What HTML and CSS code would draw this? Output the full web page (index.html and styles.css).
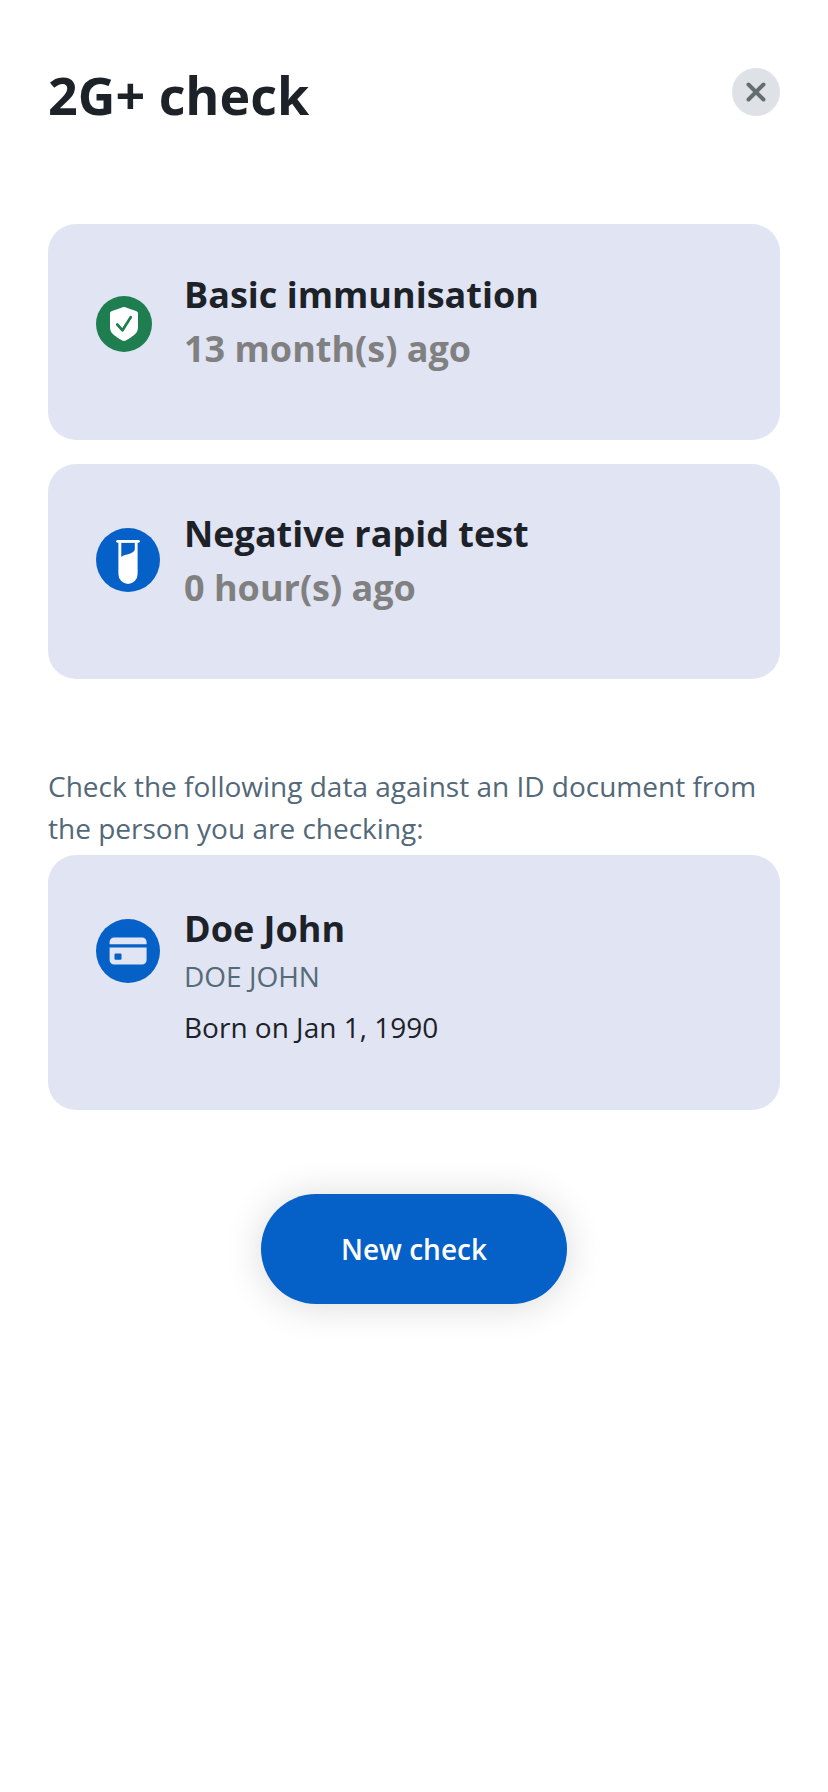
FILE: index.html
```html
<!DOCTYPE html>
<html lang="en">
<head>
<meta charset="utf-8">
<title>2G+ check</title>
<link rel="stylesheet" href="styles.css">
</head>
<body>
<main class="page">
  <header class="header">
    <h1 class="title">2G+ check</h1>
    <button class="close" aria-label="Close">
      <svg width="48" height="48" viewBox="0 0 48 48"><path d="M16.500 16.500l15 15M31.500 16.500l-15 15" stroke="#636e6e" stroke-width="4" stroke-linecap="round"/></svg>
    </button>
  </header>

  <section class="card card-immunisation">
    <div class="icon-cell">
      <svg width="56" height="56" viewBox="0 0 56 56"><circle cx="28" cy="28" r="28" fill="#1e7e50"/><path d="M28 11c1 0 2 .4 3.200.9l8.800 3.200c1.300.5 2 1.100 2 2.400V31c0 4-1.600 6.400-4.500 8.500C34.500 41.700 30 45 28 45s-6.500-3.300-9.500-5.500C15.600 37.400 14 35 14 31V17.500c0-1.300.7-1.900 2-2.400l8.800-3.200C26 11.400 27 11 28 11z" fill="#fff"/><path d="M21.300 28.500l5.200 5.800L34.700 21.200" fill="none" stroke="#1e7e50" stroke-width="2.700" stroke-linecap="round" stroke-linejoin="round"/></svg>
    </div>
    <div class="text">
      <h2 class="name">Basic immunisation</h2>
      <p class="age">13 month(s) ago</p>
    </div>
  </section>

  <section class="card card-test">
    <div class="icon-cell">
      <svg width="64" height="64" viewBox="0 0 64 64"><circle cx="32" cy="32" r="32" fill="#0560c7"/><path d="M21.500 13.300h21" stroke="#fff" stroke-width="2.700" stroke-linecap="round"/><path fill-rule="evenodd" fill="#fff" d="M22.400 13h19.200v33.300a9.600 9.600 0 0 1-19.200 0zM25.300 14.600v14.400c2-2.200 5.200-2.400 7.700-3.100 3.300-.9 5.800-2.600 5.800-4.800v-6.500z"/></svg>
    </div>
    <div class="text">
      <h2 class="name">Negative rapid test</h2>
      <p class="age">0 hour(s) ago</p>
    </div>
  </section>

  <p class="hint">Check the following data against an ID document from the person you are checking:</p>

  <section class="card card-person">
    <div class="icon-cell">
      <svg width="64" height="64" viewBox="0 0 64 64"><circle cx="32" cy="32" r="32" fill="#0560c7"/><path fill="#e1e4f3" d="M13.600 25.200v-2.200a4.500 4.500 0 0 1 4.500-4.500h28a4.500 4.500 0 0 1 4.500 4.500v2.200zM13.600 28.400h37v12.700a4.500 4.500 0 0 1-4.500 4.500h-28a4.500 4.500 0 0 1-4.500-4.500z"/><rect x="18.500" y="34.600" width="7" height="6.200" rx="1" fill="#0560c7"/></svg>
    </div>
    <div class="text">
      <h2 class="name">Doe John</h2>
      <p class="standard-name">DOE JOHN</p>
      <p class="birth">Born on Jan 1, 1990</p>
    </div>
  </section>

  <button class="new-check">New check</button>
</main>
</body>
</html>
```

FILE: styles.css
```css
* {
  box-sizing: border-box;
}

body {
  margin: 0;
  background: #fff;
  color: #1d2229;
  font-family: "Open Sans", "Noto Sans", sans-serif;
}

h1, h2, p {
  margin: 0;
}

button {
  border: 0;
  padding: 0;
  font-family: inherit;
}

.page {
  display: flex;
  flex-direction: column;
  min-height: 1792px;
  padding: 59px 48px 0;
}

.header {
  display: flex;
  justify-content: space-between;
  align-items: flex-start;
  height: 165px;
}

.title {
  font-size: 52px;
  line-height: 72px;
  font-weight: 700;
}

.close {
  width: 48px;
  height: 48px;
  margin-top: 9px;
  border-radius: 50%;
  background: #dee2e6;
}

.close svg,
.icon-cell svg {
  display: block;
}

.card {
  display: flex;
  align-items: flex-start;
  padding: 44px 48px 0;
  border-radius: 28px;
  background: #e1e4f3;
}

.card-immunisation {
  height: 216px;
}

.card-test {
  height: 215px;
  margin-top: 24px;
  padding-top: 43px;
}

.card-person {
  height: 255px;
  margin-top: 6px;
  padding-top: 47px;
}

.icon-cell {
  width: 88px;
  padding-top: 21px;
}

.card-immunisation .icon-cell {
  padding-top: 28px;
}

.card-person .icon-cell {
  padding-top: 17px;
}

.name,
.age {
  font-size: 36px;
  line-height: 54px;
  font-weight: 700;
}

.age {
  color: #808080;
}

.hint,
.standard-name,
.birth {
  font-size: 28px;
  line-height: 42px;
}

.hint {
  margin-top: 86px;
  color: #536879;
}

.standard-name {
  margin-top: -1px;
  color: #566b78;
}

.birth {
  margin-top: 9px;
}

.new-check {
  align-self: center;
  width: 306px;
  height: 110px;
  margin-top: 84px;
  border-radius: 55px;
  background: #0560c7;
  box-shadow: 0 2px 38px rgba(0, 0, 0, 0.15);
  color: #fff;
  font-size: 28px;
  line-height: 42px;
  font-weight: 600;
}
```
